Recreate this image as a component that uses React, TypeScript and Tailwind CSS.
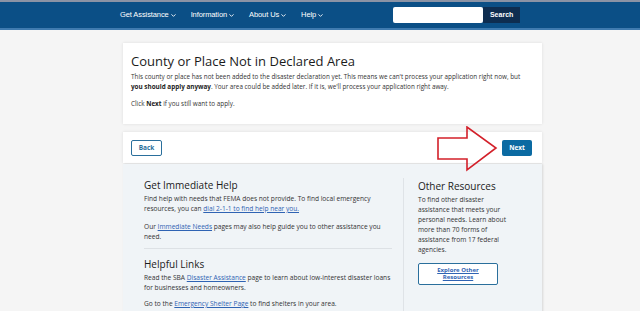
import React from 'react';
import { ChevronDown } from 'lucide-react';

const navItems = ['Get Assistance', 'Information', 'About Us', 'Help'];

const Header: React.FC = () => (
  <div>
    <div className="h-[2px] bg-[#8b93a5]" />
    <div className="h-[26px] bg-[#0b4f86] flex items-center pl-[120px] font-['Liberation_Sans',Arial,sans-serif]">
      <nav className="flex items-center gap-[14px]">
        {navItems.map((item) => (
          <span key={item} className="flex items-center gap-[1px] text-[7.5px] text-white tracking-[-0.1px]">
            {item}
            <ChevronDown size={7} strokeWidth={3} />
          </span>
        ))}
      </nav>
      <div className="flex ml-[69px]">
        <div className="w-[90px] h-[16px] bg-white rounded-[2px]" />
        <button className="w-[37px] h-[16px] bg-[#0e2d50] text-white text-[7px] font-bold">Search</button>
      </div>
    </div>
    <div className="h-[2px] bg-[#3f7bb0]" />
  </div>
);

const Link: React.FC<{ children: React.ReactNode }> = ({ children }) => (
  <a className="text-[#2f63b3] underline">{children}</a>
);

export default function App() {
  return (
    <div className="relative h-[311px] overflow-hidden bg-[#f5f5f5] font-['Open_Sans',sans-serif] text-[#333]">
      <Header />

      <div className="ml-[123px] w-[419px] mt-[13px]">
        {/* Notice card */}
        <div className="bg-white shadow-[0_0_3px_rgba(0,0,0,0.1)] pl-[8px] pr-[18px] pt-[10px] h-[81px]">
          <h1 className="text-[13px] leading-[16px] text-[#1b1b1b]">County or Place Not in Declared Area</h1>
          <p className="mt-[3px] text-[6.35px] leading-[10px]">
            This county or place has not been added to the disaster declaration yet. This means we can't process your application right now, but{' '}
            <b className="text-[#1b1b1b]">you should apply anyway</b>. Your area could be added later. If it is, we'll process your application right away.
          </p>
          <p className="mt-[7px] text-[6.35px] leading-[10px]">
            Click <b className="text-[#1b1b1b]">Next</b> if you still want to apply.
          </p>
        </div>

        {/* Actions */}
        <div className="mt-[8px] bg-white shadow-[0_0_3px_rgba(0,0,0,0.1)] h-[31px] px-[8px] flex items-center justify-between">
          <button className="w-[31px] h-[16px] border border-[#2a6f9c] rounded-[2px] text-[#2a6f9c] text-[6.5px] font-bold">Back</button>
          <button className="w-[30px] h-[16px] mr-[2px] bg-[#0b6aa2] rounded-[2px] text-white text-[6.5px] font-bold">Next</button>
        </div>

        {/* Help panel */}
        <div className="mt-[1px] bg-[#f0f4f7] shadow-[1px_0_2px_rgba(0,0,0,0.12)] h-[160px] flex pl-[21px] pt-[14px] text-[6.6px] leading-[10px]">
          <div className="w-[248px]">
            <h2 className="text-[10px] leading-[14px] text-[#1b1b1b]">Get Immediate Help</h2>
            <p className="mt-[2px]">
              Find help with needs that FEMA does not provide. To find local emergency resources, you can <Link>dial 2-1-1 to find help near you.</Link>
            </p>
            <p className="mt-[8px]">
              Our <Link>Immediate Needs</Link> pages may also help guide you to other assistance you need.
            </p>
            <div className="mt-[6px] h-px bg-[#dde1e5]" />
            <h2 className="mt-[8px] text-[10px] leading-[14px] text-[#1b1b1b]">Helpful Links</h2>
            <p className="mt-[2px]">
              Read the SBA <Link>Disaster Assistance</Link> page to learn about low-interest disaster loans for businesses and homeowners.
            </p>
            <p className="mt-[6px]">
              Go to the <Link>Emergency Shelter Page</Link> to find shelters in your area.
            </p>
          </div>
          <div className="ml-[11px] border-l border-[#dfe3e7] pl-[14px] pt-[1px] h-[200px]">
            <div className="w-[90px]">
              <h2 className="text-[10px] leading-[14px] text-[#1b1b1b]">Other Resources</h2>
              <p className="mt-[2px]">
                To find other disaster assistance that meets your personal needs. Learn about more than 70 forms of assistance from 17 federal agencies.
              </p>
              <button className="mt-[8px] w-[80px] h-[22px] border border-[#2a6f9c] rounded-[2px] bg-white text-[6px] leading-[7px] font-bold text-[#2f63b3] underline">
                Explore Other
                <br />
                Resources
              </button>
            </div>
          </div>
        </div>
      </div>

      {/* annotation arrow */}
      <svg className="absolute left-[437px] top-[126px]" width="62" height="46" viewBox="0 0 62 46">
        <polygon
          points="1,12 30,12 30,1 59,22 30,44 30,33 1,33"
          fill="none"
          stroke="#d3202a"
          strokeWidth="1.6"
          strokeLinejoin="miter"
        />
      </svg>
    </div>
  );
}
